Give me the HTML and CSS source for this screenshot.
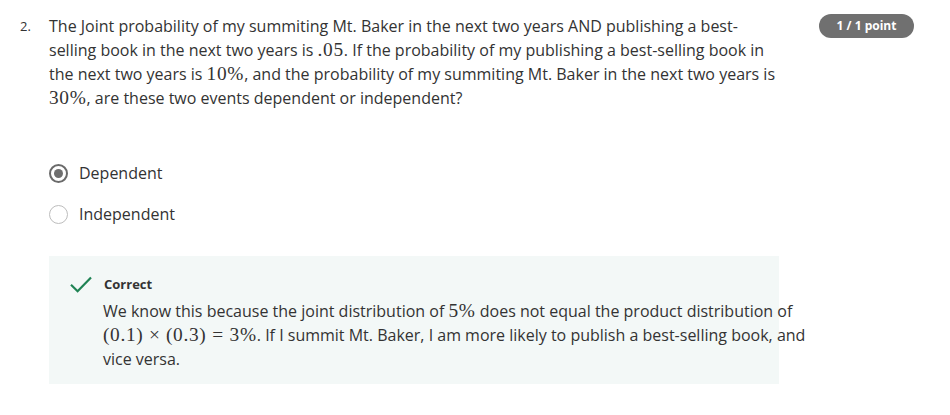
FILE: index.html
```html
<!DOCTYPE html>
<html>
<head>
<meta charset="utf-8">
<link rel="stylesheet" href="styles.css">
</head>
<body>
<div class="question">
  <div class="num">2.</div>
  <div class="content">
    <p class="prompt"><span>The Joint probability of my summiting Mt. Baker in the next two years AND publishing a best-</span><span>selling book in the next two years is </span><span class="m">.05</span><span>. If the probability of my publishing a best-selling book in</span> <span>the next two years is </span><span class="m">10%</span><span>, and the probability of my summiting Mt. Baker in the next two years is</span> <span class="m">30%</span><span>, are these two events dependent or independent?</span></p>
    <div class="options">
      <label class="option"><span class="radio checked"></span><span class="label">Dependent</span></label>
      <label class="option"><span class="radio"></span><span class="label">Independent</span></label>
    </div>
    <div class="feedback">
      <div class="fb-head">
        <svg class="check" width="22" height="17" viewBox="0 0 22 17"><path d="M1 8.8 L7.6 15.2 L21 1.6" fill="none" stroke="#1f8354" stroke-width="2.2"/></svg>
        <span class="fb-title">Correct</span>
      </div>
      <p class="fb-text"><span>We know this because the joint distribution of </span><span class="m">5%</span><span> does not equal the product distribution of</span> <span class="m">(0.1)</span><span class="m bin">×</span><span class="m">(0.3)</span><span class="m rel">=</span><span class="m">3%</span><span>. If I summit Mt. Baker, I am more likely to publish a best-selling book, and</span> <span>vice versa.</span></p>
    </div>
  </div>
  <div class="badge">1 / 1 point</div>
</div>
</body>
</html>
```
FILE: styles.css
```css
html, body {
  margin: 0;
  padding: 0;
  background: #ffffff;
}
body {
  font-family: "Open Sans", "Liberation Sans", sans-serif;
  color: #333333;
  font-size: 16px;
  line-height: 24px;
}
.question {
  display: flex;
  align-items: flex-start;
  padding: 14px 36px 0 20px;
}
.num {
  width: 29px;
  flex: none;
  font-size: 13px;
  line-height: 24px;
}
.content {
  width: 730px;
  flex: none;
}
.prompt {
  margin: 0;
}
.m {
  font-family: "Liberation Serif", "DejaVu Serif", serif;
  font-size: 1.21em;
  line-height: 1;
  letter-spacing: 0.035em;
}
.bin {
  padding: 0 0.28em;
}
.rel {
  padding: 0 0.3em;
}
.options {
  display: flex;
  flex-direction: column;
  gap: 17px;
  margin-top: 51px;
}
.option {
  display: flex;
  align-items: center;
  height: 24px;
}
.radio {
  box-sizing: border-box;
  width: 19px;
  height: 19px;
  border-radius: 50%;
  border: 1.5px solid #bdbdbd;
  flex: none;
  display: flex;
  align-items: center;
  justify-content: center;
}
.radio.checked {
  border: 2px solid #6a6a6a;
}
.radio.checked::after {
  content: "";
  width: 9px;
  height: 9px;
  border-radius: 50%;
  background: #6f6f6f;
}
.label {
  margin-left: 11px;
}
.feedback {
  margin-top: 30px;
  background: #f3f8f7;
  padding: 18px 0 13px 21px;
}
.fb-head {
  display: flex;
  align-items: center;
  height: 20px;
}
.check {
  display: block;
  flex: none;
}
.fb-title {
  margin-left: 12px;
  font-size: 13px;
  font-weight: 700;
  color: #333333;
}
.fb-text {
  margin: 5px 0 0 33px;
  width: 720px;
}
.badge {
  margin-left: auto;
  background: #707070;
  color: #ffffff;
  font-size: 12px;
  font-weight: 700;
  line-height: 24px;
  height: 24px;
  width: 95px;
  text-align: center;
  border-radius: 12px;
  flex: none;
}
```
